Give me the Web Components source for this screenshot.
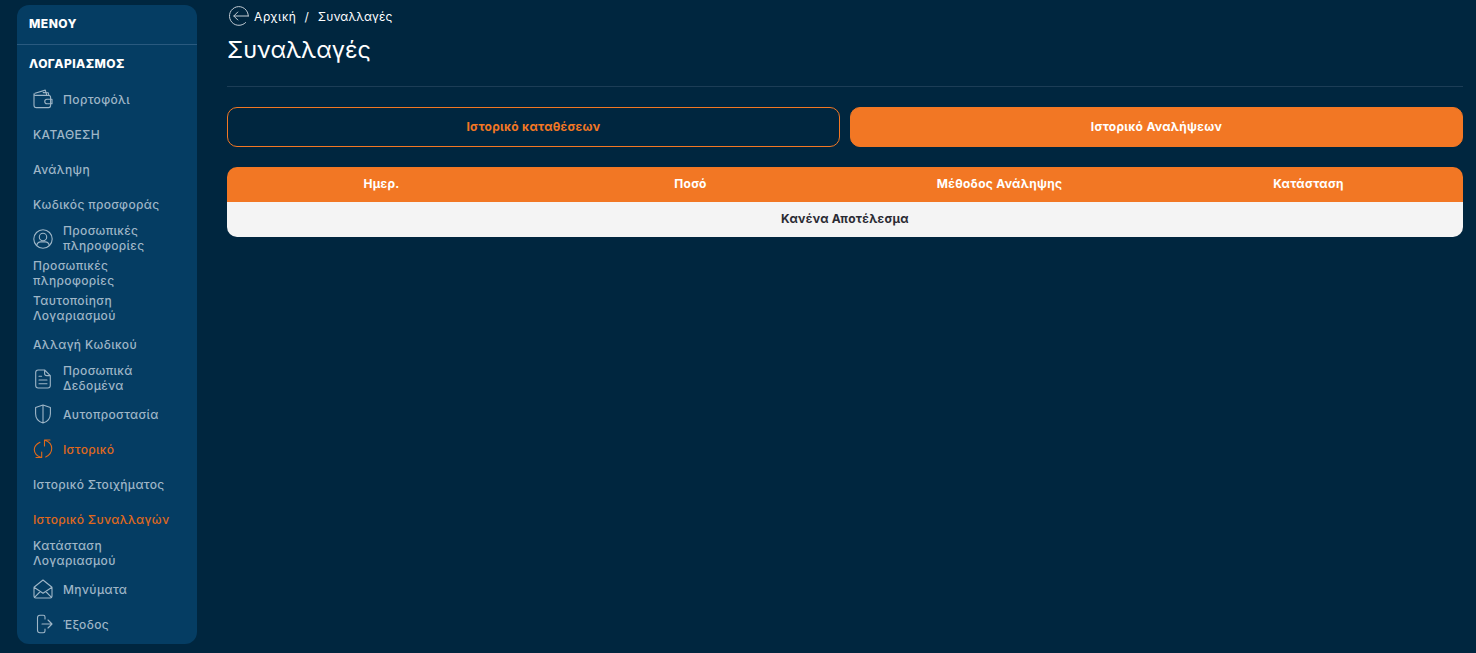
<!DOCTYPE html>
<html lang="el">
<head>
<meta charset="utf-8">
<title>Συναλλαγές</title>
<style>
  html, body { margin: 0; height: 100%; background: #00263f; }
  body { font-family: Inter, "Noto Sans", sans-serif; overflow: hidden; }
</style>
</head>
<body>
<template id="icons">
  <svg data-name="wallet" viewBox="0 0 20 20"><path d="M2.500 6.500C1.500 6.500 1 5.600 1 4.800v11.400C1 17.800 2 18.600 3.400 18.600h12.200c1.200 0 2-.8 2-2V8.300c0-1.100-.8-1.900-2-1.900H2.600M2 4.200 12.300 1.100l1.500 5.200M10.200 3.600l5 .1.600 2.500"/><path d="M19 10.200h-5a2.200 2.200 0 0 0 0 4.500h5z"/></svg>
  <svg data-name="user" viewBox="0 0 20 20"><circle cx="10" cy="10" r="9.200"/><circle cx="10" cy="8" r="3.700"/><path d="M3.700 16.300c.6-2.300 2.200-3.400 3.900-3.400h4.800c1.700 0 3.300 1.100 3.900 3.400"/></svg>
  <svg data-name="doc" viewBox="0 0 20 20"><path d="M11.600 1H5.200C3.600 1 2.700 2 2.700 3.500v13C2.700 18 3.600 19 5.200 19h9.600c1.600 0 2.500-1 2.500-2.500V6.600zM11.600 1v3.400c0 1.400.8 2.200 2.200 2.200h3.500M6 7.200h2.600M6 11h8M6 14.800h8"/></svg>
  <svg data-name="shield" viewBox="0 0 20 20"><path d="M10 1 2.600 3.600v6.100c0 4.700 3.200 8 7.400 9.300 4.200-1.300 7.400-4.600 7.400-9.300V3.600zM10 1v18"/></svg>
  <svg data-name="history" viewBox="0 0 20 20"><path d="M7 3.300C3.500 5 1.300 7.500 1.300 10.500c0 3.500 2.500 6.500 7 8M3 18.500h5.700V13M12 1.200c4 1.300 6.700 4.500 6.700 8.300 0 3.500-2.400 6.700-6 8.500M17 1h-5.500v6"/></svg>
  <svg data-name="mail" viewBox="0 0 20 20"><path d="M1 8.300 10 1l9 7.300v9c0 1-.7 1.700-1.700 1.700H2.700C1.700 19 1 18.300 1 17.300zM1 8.300l9 6 9-6M1.500 18.300 7.300 12.500M18.500 18.300 12.700 12.500"/></svg>
  <svg data-name="exit" viewBox="0 0 20 20"><path d="M12 5V3c0-1-.7-1.700-1.700-1.700H7C5.500 1.300 4.500 2.300 4.500 3.800v12.400c0 1.500 1 2.500 2.500 2.500h3.300c1 0 1.700-.7 1.700-1.700v-2M9 10h10M15 6l4 4-4 4"/></svg>
  <svg data-name="back" viewBox="0 0 20 20"><path d="M19.300 10H4.800M8.800 6l-4 4 4 4M19.300 10A9.400 9.400 0 1 0 16.600 16.600"/></svg>
</template>

<app-shell>
  <side-menu slot="side">
    <side-item icon="wallet">Πορτοφόλι</side-item>
    <side-item>ΚΑΤΑΘΕΣΗ</side-item>
    <side-item>Ανάληψη</side-item>
    <side-item>Κωδικός προσφοράς</side-item>
    <side-item icon="user" wrap>Προσωπικές<br>πληροφορίες</side-item>
    <side-item wrap>Προσωπικές<br>πληροφορίες</side-item>
    <side-item wrap>Ταυτοποίηση<br>Λογαριασμού</side-item>
    <side-item>Αλλαγή Κωδικού</side-item>
    <side-item icon="doc" wrap>Προσωπικά<br>Δεδομένα</side-item>
    <side-item icon="shield">Αυτοπροστασία</side-item>
    <side-item icon="history" active>Ιστορικό</side-item>
    <side-item>Ιστορικό Στοιχήματος</side-item>
    <side-item active>Ιστορικό Συναλλαγών</side-item>
    <side-item wrap>Κατάσταση<br>Λογαριασμού</side-item>
    <side-item icon="mail">Μηνύματα</side-item>
    <side-item icon="exit">Έξοδος</side-item>
  </side-menu>
  <page-head crumb="Αρχική" current="Συναλλαγές" title="Συναλλαγές"></page-head>
  <tab-row>
    <tab-button>Ιστορικό καταθέσεων</tab-button>
    <tab-button selected>Ιστορικό Αναλήψεων</tab-button>
  </tab-row>
  <result-table columns="Ημερ.|Ποσό|Μέθοδος Ανάληψης|Κατάσταση" empty="Κανένα Αποτέλεσμα"></result-table>
</app-shell>

<script>
function icon(name) {
  const src = document.getElementById('icons').content.querySelector(`[data-name="${name}"]`)
  return src ? src.cloneNode(true) : null
}

class AppShell extends HTMLElement {
  constructor() {
    super()
    this.attachShadow({ mode: 'open' }).innerHTML = `
      <style>
        :host {
          display: grid;
          grid-template-columns: 180px 1fr;
          column-gap: 30px;
          height: 653px;
          box-sizing: border-box;
          padding: 5px 13px 9px 17px;
        }
        .main { display: flex; flex-direction: column; min-width: 0; }
      </style>
      <slot name="side"></slot>
      <div class="main"><slot></slot></div>`
  }
}

class SideMenu extends HTMLElement {
  constructor() {
    super()
    this.attachShadow({ mode: 'open' }).innerHTML = `
      <style>
        :host {
          display: block;
          background: #053d63;
          border-radius: 12px;
          color: #fff;
        }
        .head {
          height: 40px;
          box-sizing: border-box;
          padding: 0 12px 2px;
          display: flex;
          align-items: center;
          font-size: 12px;
          font-weight: 800;
          letter-spacing: .5px;
          border-bottom: 1px solid #2a5a7f;
        }
        .title {
          height: 36.5px;
          box-sizing: border-box;
          padding: 1px 12px 0;
          display: flex;
          align-items: center;
          font-size: 12px;
          font-weight: 800;
          letter-spacing: .45px;
        }
      </style>
      <div class="head">ΜΕΝΟΥ</div>
      <div class="title">ΛΟΓΑΡΙΑΣΜΟΣ</div>
      <slot></slot>`
  }
}

class SideItem extends HTMLElement {
  constructor() {
    super()
    this.attachShadow({ mode: 'open' }).innerHTML = `
      <style>
        :host {
          display: flex;
          align-items: center;
          gap: 10px;
          height: 35px;
          padding-left: 16px;
          font-size: 12px;
          font-weight: 500;
          line-height: 15px;
          letter-spacing: .35px;
          color: #9fb6c7;
        }
        :host([active]) { color: #e0691b; }
        :host([wrap]) .label { margin-bottom: 2px; }
        svg {
          flex: none;
          display: block;
          width: 20px;
          height: 20px;
          fill: none;
          stroke: currentColor;
          stroke-width: 1.1;
          stroke-linecap: round;
          stroke-linejoin: round;
        }
      </style>
      <div class="label"><slot></slot></div>`
    const svg = icon(this.getAttribute('icon'))
    if (svg) this.shadowRoot.insertBefore(svg, this.shadowRoot.querySelector('.label'))
  }
}

class PageHead extends HTMLElement {
  constructor() {
    super()
    this.attachShadow({ mode: 'open' }).innerHTML = `
      <style>
        :host {
          display: block;
          color: #fff;
          height: 81px;
          border-bottom: 1px solid #1c3d56;
        }
        .crumbs {
          display: flex;
          align-items: center;
          height: 22px;
          padding-left: 2px;
          font-size: 12px;
        }
        .crumbs svg {
          display: block;
          width: 20px;
          height: 20px;
          margin-right: 5px;
          fill: none;
          stroke: #c3ccd4;
          stroke-width: 1;
          stroke-linecap: round;
          stroke-linejoin: round;
        }
        .c { letter-spacing: .6px; }
        .n { letter-spacing: .1px; }
        .sep { margin: 0 9px 0 8px; }
        h1 {
          margin: 8px 0 0;
          font-size: 23.5px;
          line-height: 30px;
          font-weight: 400;
          letter-spacing: 0;
        }
      </style>
      <div class="crumbs"><span class="c"></span><span class="sep">/</span><span class="n"></span></div>
      <h1></h1>`
    const s = this.shadowRoot
    s.querySelector('.crumbs').prepend(icon('back'))
    s.querySelector('.c').textContent = this.getAttribute('crumb')
    s.querySelector('.n').textContent = this.getAttribute('current')
    s.querySelector('h1').textContent = this.getAttribute('title')
  }
}

class TabRow extends HTMLElement {
  constructor() {
    super()
    this.attachShadow({ mode: 'open' }).innerHTML = `
      <style>
        :host {
          display: grid;
          grid-template-columns: 1fr 1fr;
          gap: 10px;
          margin-top: 20px;
        }
      </style>
      <slot></slot>`
  }
}

class TabButton extends HTMLElement {
  constructor() {
    super()
    this.attachShadow({ mode: 'open' }).innerHTML = `
      <style>
        :host {
          display: flex;
          align-items: center;
          justify-content: center;
          height: 40px;
          box-sizing: border-box;
          padding-bottom: 2px;
          border: 1px solid #f27724;
          border-radius: 10px;
          font-size: 12px;
          font-weight: 700;
          letter-spacing: .28px;
          color: #f27724;
        }
        :host([selected]) { background: #f27724; color: #fff; }
      </style>
      <slot></slot>`
  }
}

class ResultTable extends HTMLElement {
  constructor() {
    super()
    this.attachShadow({ mode: 'open' }).innerHTML = `
      <style>
        :host {
          display: block;
          margin-top: 20px;
          border-radius: 10px;
          overflow: hidden;
          font-size: 12px;
          font-weight: 700;
          letter-spacing: .28px;
        }
        .cols {
          display: grid;
          grid-template-columns: repeat(4, 1fr);
          background: #f27724;
          color: #fff;
        }
        .cols span, .empty {
          display: flex;
          align-items: center;
          justify-content: center;
          height: 35px;
          box-sizing: border-box;
          padding-bottom: 2px;
        }
        .empty { background: #f4f4f4; color: #2b2b33; }
      </style>
      <div class="cols"></div>
      <div class="empty"></div>`
    const cols = this.shadowRoot.querySelector('.cols')
    this.getAttribute('columns').split('|').forEach((name) => {
      const cell = document.createElement('span')
      cell.textContent = name
      cols.appendChild(cell)
    })
    this.shadowRoot.querySelector('.empty').textContent = this.getAttribute('empty')
  }
}

customElements.define('app-shell', AppShell)
customElements.define('side-menu', SideMenu)
customElements.define('side-item', SideItem)
customElements.define('page-head', PageHead)
customElements.define('tab-row', TabRow)
customElements.define('tab-button', TabButton)
customElements.define('result-table', ResultTable)
</script>
</body>
</html>
